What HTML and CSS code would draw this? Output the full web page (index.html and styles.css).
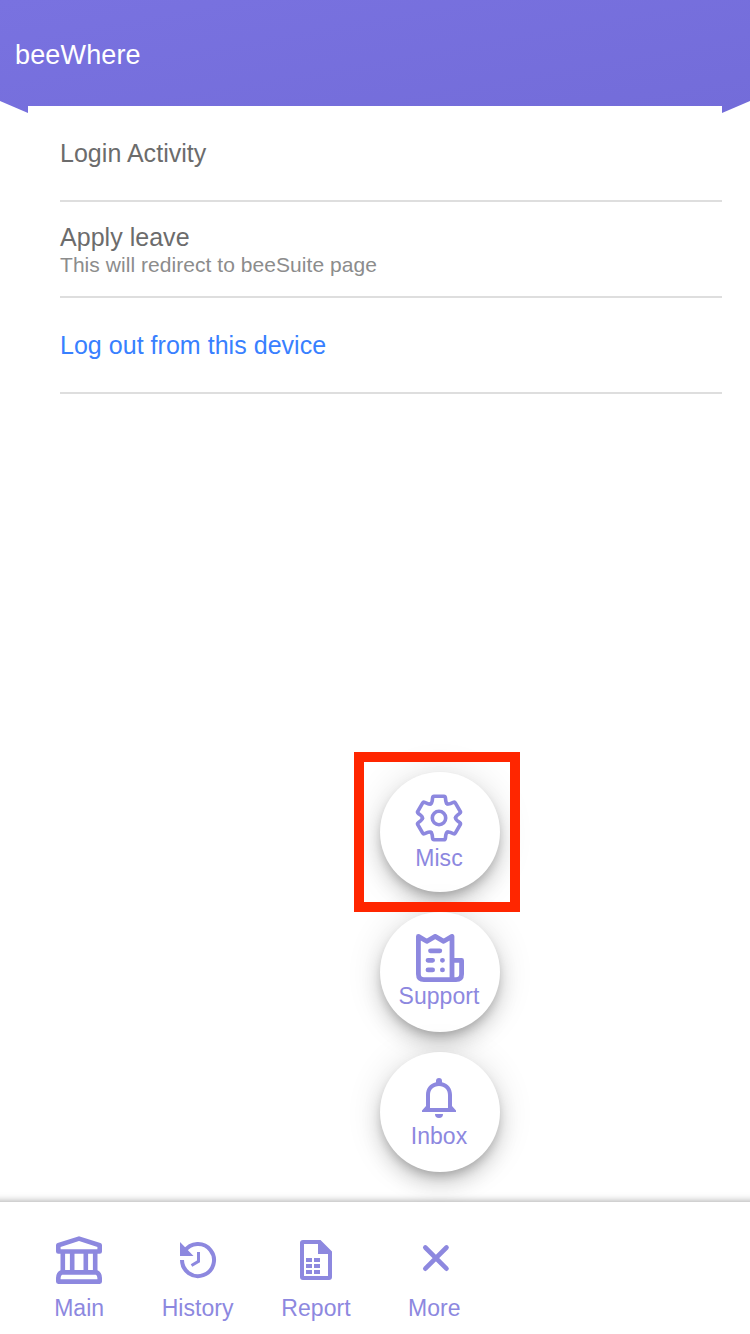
FILE: index.html
```html
<!DOCTYPE html>
<html lang="en">
<head>
<meta charset="utf-8">
<title>beeWhere</title>
<link rel="stylesheet" href="styles.css">
</head>
<body>
<div class="app">
  <header class="header"><h1 class="title">beeWhere</h1></header>
  <main class="content">
    <ul class="list">
      <li class="item"><span class="label">Login Activity</span></li>
      <li class="item item-two"><span class="label">Apply leave</span><span class="note">This will redirect to beeSuite page</span></li>
      <li class="item"><a class="label link">Log out from this device</a></li>
    </ul>
  </main>
  <div class="fab-list">
    <div class="fab fab-misc">
      <svg class="icon" width="48" height="48" viewBox="-24 -24 48 48" fill="none" stroke="currentColor" stroke-width="3.6" stroke-linecap="round">
        <defs><path id="tooth" d="M-8.6-14.1Q-7-15.2-6.8-17L-6.4-20.2Q-6.2-21.7-5-21.7H5Q6.2-21.7 6.4-20.2L6.8-17Q7-15.2 8.2-14.3"/></defs>
        <use href="#tooth"/><use href="#tooth" transform="rotate(60)"/><use href="#tooth" transform="rotate(120)"/><use href="#tooth" transform="rotate(180)"/><use href="#tooth" transform="rotate(240)"/><use href="#tooth" transform="rotate(300)"/>
        <circle r="6.7"/>
      </svg>
      <span class="caption">Misc</span>
    </div>
    <div class="fab">
      <svg class="icon icon-support" width="48" height="48" viewBox="0 0 48 48" fill="none" stroke="currentColor" stroke-width="4.8" stroke-linecap="round" stroke-linejoin="round">
        <path d="M36 45.6H8Q2.400 45.600 2.400 40V2.400L10.700 7.300 19.200 2.400 27.700 7.300 36 2.400V45.600H40Q45.600 45.600 45.600 40V26.400H36"/>
        <path d="M14.500 16.800H23.800M12 26.300H16.600M12 35.900H16.600M26.400 26.300H26.500M26.400 35.900H26.500"/>
      </svg>
      <span class="caption">Support</span>
    </div>
    <div class="fab">
      <svg class="icon" width="48" height="48" viewBox="0 0 48 48" fill="currentColor">
        <path fill-rule="evenodd" d="M24 4A3 3 0 0 0 21 7V8.200C14.500 9.700 11 14.500 11 21V32L7 36.500V38H41V36.500L37 32V21C37 14.500 33.500 9.700 27 8.200V7A3 3 0 0 0 24 4ZM15 34V21C15 15.500 18.500 12 24 12S33 15.500 33 21V34Z"/>
        <path d="M20 40H28A4 4 0 0 1 20 40Z"/>
      </svg>
      <span class="caption">Inbox</span>
    </div>
  </div>
  <div class="highlight"></div>
  <nav class="tabs">
    <div class="tab">
      <svg class="icon" width="48" height="48" viewBox="0 0 48 48" fill="none" stroke="currentColor" stroke-width="4.600" stroke-linejoin="round">
        <path d="M24 2.600L3.300 9.300V15.500H44.700V9.300ZM7.800 16V36.500M17.200 16V36.500M30.800 16V36.500M40.200 16V36.500M6.500 36.400H41.500Q44.700 38 44.700 42V45.600H3.300V42Q3.300 38 6.500 36.400Z"/>
      </svg>
      <span class="caption">Main</span>
    </div>
    <div class="tab">
      <svg class="icon" width="48" height="48" viewBox="0 0 48 48" fill="none" stroke="currentColor" stroke-width="4">
        <path d="M10.500 15.500A16 16 0 1 1 8 24"/>
        <path fill="currentColor" stroke="none" d="M6 6V20H19.500Z"/>
        <path stroke-width="3" d="M24.500 16V25.300L17.500 29.500"/>
      </svg>
      <span class="caption">History</span>
    </div>
    <div class="tab">
      <svg class="icon" width="48" height="48" viewBox="0 0 48 48" fill="currentColor">
        <path fill-rule="evenodd" d="M11 4H28.500L40 15.500V41Q40 44 37 44H11Q8 44 8 41V7Q8 4 11 4ZM12 8V40H36V18H26V8Z"/>
        <path d="M14 22H20V26H14ZM22 22H28V26H22ZM14 28H20V32H14ZM22 28H28V32H22ZM14 34H20V38H14ZM22 34H28V38H22Z"/>
      </svg>
      <span class="caption">Report</span>
    </div>
    <div class="tab">
      <svg class="icon" width="44" height="48" viewBox="0 0 44 48" fill="none" stroke="currentColor" stroke-width="4.600" stroke-linecap="round">
        <path d="M13.300 11.500L34.500 32.700M34.500 11.500L13.300 32.700"/>
      </svg>
      <span class="caption">More</span>
    </div>
  </nav>
</div>
</body>
</html>
```
FILE: styles.css
```css
* { box-sizing: border-box; }
body { margin: 0; background: #fff; font-family: "Liberation Sans", Arial, sans-serif; }
.app { position: relative; display: flex; flex-direction: column; height: 1334px; overflow: hidden; }
.header {
  flex: none;
  height: 113px;
  padding: 39px 15px 0;
  background: linear-gradient(170deg, #7972e0, #736cd9);
  clip-path: polygon(0 0, 100% 0, 100% 101px, 722px 113px, 28px 113px, 0 101px);
}
.title { margin: 0; color: #fff; font-size: 27px; font-weight: 400; line-height: 32px; letter-spacing: 0.15px; }
.content { position: relative; flex: 1; margin: -7px 28px 0; padding-left: 32px; background: #fff; }
.list { margin: 0; padding: 0; list-style: none; }
.item { display: flex; flex-direction: column; justify-content: center; height: 96px; border-bottom: 2px solid #dedede; }
.item-two { padding-top: 2px; }
.label { color: #6c6c6c; font-size: 25px; line-height: 28px; letter-spacing: 0.03px; }
.note { color: #8c8c8c; font-size: 21px; line-height: 28px; letter-spacing: 0.05px; }
.item-two .label { margin-top: 2px; }
.link { color: #3880ff; }
.fab-list { position: absolute; left: 380px; top: 772px; display: flex; flex-direction: column; gap: 20px; color: #8d88df; }
.fab {
  display: flex; flex-direction: column; align-items: center;
  width: 120px; height: 120px; padding: 22px 2px 0 0; border-radius: 50%;
  background: #fff;
  box-shadow: 0 6px 10px -2px rgba(0,0,0,.2), 0 12px 20px rgba(0,0,0,.14), 0 2px 36px rgba(0,0,0,.12);
}
.icon { display: block; flex: none; }
.icon-support { margin-left: 2px; }
.caption { font-size: 23px; line-height: 28px; letter-spacing: 0.05px; }
.fab-misc .caption { margin-top: 2px; }
.highlight { position: absolute; left: 354px; top: 752px; width: 166px; height: 160px; border: 10px solid #ff2600; }
.tabs {
  position: relative; flex: none; display: flex; height: 132px; margin: 0 -20px; padding: 34px 0 0 40px;
  background: #fff; color: #8d88df;
  box-shadow: 0 0 8px rgba(0,0,0,.4);
}
.tab { display: flex; flex-direction: column; align-items: center; gap: 10px; width: 118.400px; }
```
